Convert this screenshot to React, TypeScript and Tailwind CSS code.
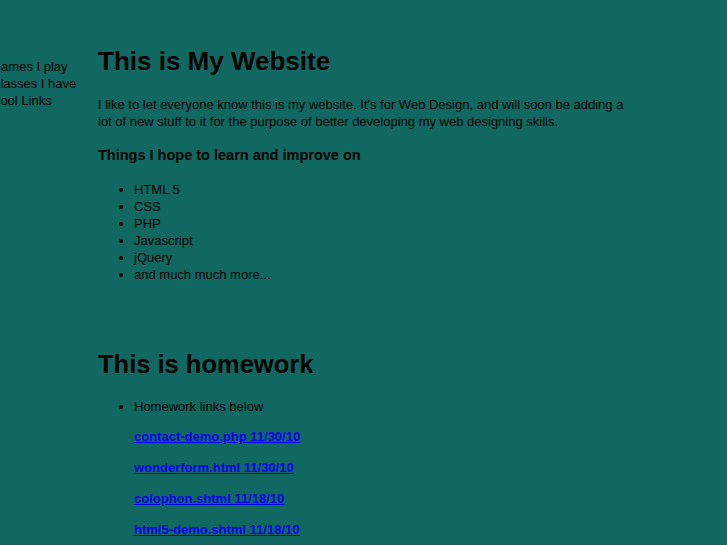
export default function App() {
  const learn = ["HTML 5", "CSS", "PHP", "Javascript", "jQuery", "and much much more..."];
  const links = [
    "contact-demo.php 11/30/10",
    "wonderform.html 11/30/10",
    "colophon.shtml 11/18/10",
    "html5-demo.shtml 11/18/10",
  ];

  return (
    <div
      className="flex min-h-screen overflow-hidden bg-[#116860] text-black"
      style={{ fontFamily: '"Liberation Sans", Arial, sans-serif' }}
    >
      {/* sidebar, pushed partly off the left edge */}
      <div className="w-[98px] shrink-0 pt-[58px]">
        <ul className="-ml-[9px] text-[13px] leading-[17px]">
          <li>Games I play</li>
          <li>Classes I have</li>
          <li>Cool Links</li>
        </ul>
      </div>

      <div className="w-[540px] pt-[46px] text-[13px] leading-[17px]">
        <h1 className="text-[26px] leading-[30px] font-bold">This is My Website</h1>
        <p className="mt-[20px]">
          I like to let everyone know this is my website. It's for Web Design, and will soon be adding a lot of new
          stuff to it for the purpose of better developing my web designing skills.
        </p>
        <h3 className="mt-[16px] text-[14.5px] leading-[19px] font-bold">Things I hope to learn and improve on</h3>
        <ul className="mt-[16px] list-disc pl-[36px]">
          {learn.map((t) => (
            <li key={t}>{t}</li>
          ))}
        </ul>

        <h2 className="mt-[66px] text-[25.5px] leading-[30px] font-bold">This is homework</h2>
        <ul className="mt-[19px] list-disc pl-[36px]">
          <li>Homework links below</li>
        </ul>
        <div className="mt-[13px] flex flex-col gap-[14px] pl-[36px]">
          {links.map((l) => (
            <a key={l} href="#" className="font-bold text-[#0000ee] underline">
              {l}
            </a>
          ))}
        </div>
      </div>
    </div>
  );
}
